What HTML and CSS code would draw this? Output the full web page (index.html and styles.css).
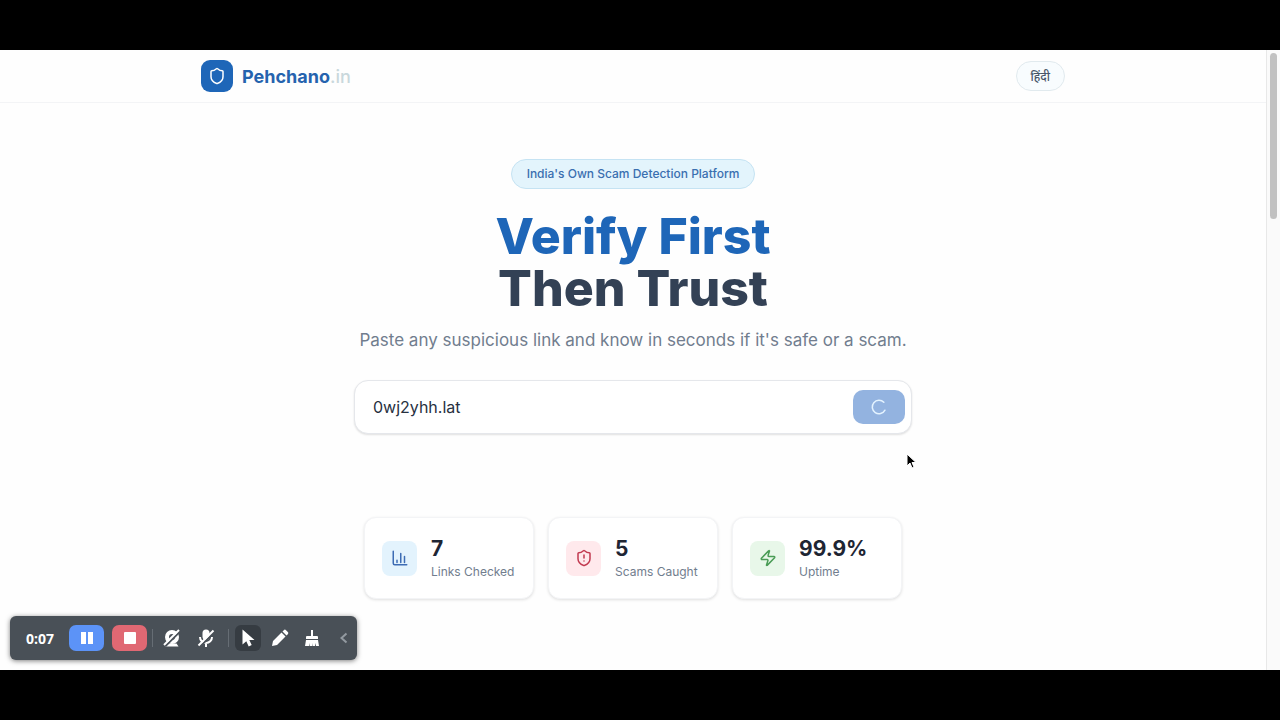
FILE: index.html
```html
<!DOCTYPE html>
<html lang="en">

<head>
  <meta charset="UTF-8" />
  <title>Pehchano.in</title>
  <meta name="viewport" content="width=device-width, initial-scale=1.0" />
  <link rel="stylesheet" href="styles.css">
</head>

<body>

  <div class="screen">
    <div class="page">
      <header class="header">
        <div class="header-inner">
          <a href="#" class="brand">
            <span class="brand-icon">
              <svg viewBox="0 0 24 24" width="18" height="18"><path d="M20 13c0 5-3.500 7.500-7.660 8.950a1 1 0 0 1-.67-.01C7.500 20.500 4 18 4 13V6a1 1 0 0 1 1-1c2 0 4.500-1.200 6.240-2.720a1.170 1.170 0 0 1 1.520 0C14.510 3.810 17 5 19 5a1 1 0 0 1 1 1z" /></svg>
            </span>
            <span class="brand-name">Pehchano<span class="brand-tld">.in</span></span>
          </a>
          <button type="button" class="lang-btn" lang="hi">हिंदी</button>
        </div>
      </header>

      <main class="hero">
        <span class="badge">India's Own Scam Detection Platform</span>
        <h1><span class="title-blue">Verify First</span><br>Then Trust</h1>
        <p class="subtitle">Paste any suspicious link and know in seconds if it's safe or a scam.</p>

        <form class="search">
          <input type="text" class="search-input" aria-label="Link to check" value="0wj2yhh.lat" />
          <button type="submit" class="search-btn" aria-label="Check link" disabled>
            <svg viewBox="0 0 24 24" width="18" height="18"><path d="M21 12a9 9 0 1 1-6.219-8.560" transform="rotate(28 12 12)" /></svg>
          </button>
        </form>

        <div class="stats">
          <div class="card">
            <span class="card-icon blue">
              <svg viewBox="0 0 24 24" width="18" height="18"><path d="M3 3v16a2 2 0 0 0 2 2h16M8 18v-3M13 18V6M18 18v-8" /></svg>
            </span>
            <div>
              <div class="card-value">7</div>
              <div class="card-label">Links Checked</div>
            </div>
          </div>
          <div class="card">
            <span class="card-icon red">
              <svg viewBox="0 0 24 24" width="18" height="18"><path d="M20 13c0 5-3.500 7.500-7.660 8.950a1 1 0 0 1-.67-.01C7.500 20.500 4 18 4 13V6a1 1 0 0 1 1-1c2 0 4.500-1.200 6.240-2.720a1.170 1.170 0 0 1 1.520 0C14.510 3.810 17 5 19 5a1 1 0 0 1 1 1zM12 8v4M12 16h.01" /></svg>
            </span>
            <div>
              <div class="card-value">5</div>
              <div class="card-label">Scams Caught</div>
            </div>
          </div>
          <div class="card">
            <span class="card-icon green">
              <svg viewBox="0 0 24 24" width="18" height="18"><path d="M4 14a1 1 0 0 1-.78-1.630l9.900-10.200a.5.5 0 0 1 .86.460l-1.920 6.020A1 1 0 0 0 13 10h7a1 1 0 0 1 .78 1.630l-9.900 10.200a.5.5 0 0 1-.86-.46l1.920-6.020A1 1 0 0 0 11 14z" /></svg>
            </span>
            <div>
              <div class="card-value">99.9%</div>
              <div class="card-label">Uptime</div>
            </div>
          </div>
        </div>
      </main>
    </div>

    <div class="scrollbar"><div class="thumb"></div></div>

    <svg class="cursor" viewBox="0 0 12 18" width="12" height="18"><path d="M1 1v12l3-3 2 5 2-1-2-4.500h4z" /></svg>

    <div class="recorder">
      <span class="time">0:07</span>
      <button type="button" class="rec-btn pause" aria-label="Pause">
        <svg viewBox="0 0 14 14" width="14" height="14"><path d="M1 1h5v12H1zM8 1h5v12H8z" /></svg>
      </button>
      <button type="button" class="rec-btn stop" aria-label="Stop">
        <svg viewBox="0 0 14 14" width="14" height="14"><rect x="1" y="1" width="12" height="12" rx="1" /></svg>
      </button>
      <span class="sep"></span>
      <div class="tools media">
        <button type="button" class="tool" aria-label="Camera off">
          <svg viewBox="0 0 20 20" width="20" height="20">
            <circle cx="10" cy="9" r="7" />
            <circle cx="10" cy="9" r="3" class="hole" />
            <path d="M3.500 18.500l2-3h9l2 3z" />
            <path d="M3.500 18L19 2.500" class="gap" />
            <path d="M2 17L17 2" class="slash" />
          </svg>
        </button>
        <button type="button" class="tool" aria-label="Microphone off">
          <svg viewBox="0 0 20 20" width="20" height="20">
            <rect x="6.500" y="1.500" width="7" height="10.500" rx="3.500" />
            <path d="M4 9a6 6 0 0 0 12 0M10 15v4" class="slash" />
            <path d="M4 18.500L19.500 3" class="gap" />
            <path d="M2.500 17.500L17.500 2.500" class="slash" />
          </svg>
        </button>
      </div>
      <span class="sep"></span>
      <div class="tools">
        <button type="button" class="tool active" aria-label="Pointer">
          <svg viewBox="0 0 20 20" width="20" height="20"><path d="M4.500 1.500v15l3.800-3.200 2.400 5.200 3-1.400-2.400-5H16.500z" /></svg>
        </button>
        <button type="button" class="tool" aria-label="Draw">
          <svg viewBox="0 0 20 20" width="20" height="20"><path d="M2 18l1-5 8.500-8.500 4 4L7 17zM12.500 3.500l1.300-1.300a1.500 1.500 0 0 1 2.200 0l1.800 1.800a1.500 1.500 0 0 1 0 2.200l-1.300 1.300z" /></svg>
        </button>
        <button type="button" class="tool" aria-label="Clear">
          <svg viewBox="0 0 20 20" width="20" height="20"><path d="M9 2h2v6h4a1 1 0 0 1 1 1v2H4V9a1 1 0 0 1 1-1h4zM4 12h12l1 6h-3l-.5-3-.5 3h-2v-3l-.5 3H8v-3l-.7 3H3z" /></svg>
        </button>
      </div>
      <button type="button" class="collapse" aria-label="Collapse">
        <svg viewBox="0 0 8 12" width="8" height="12"><path d="M6.500 1.500L1.500 6l5 4.500" /></svg>
      </button>
    </div>
  </div>

</body>

</html>
```
FILE: styles.css
```css
* {
  margin: 0;
  padding: 0;
  box-sizing: border-box;
  font-family: Inter, "Noto Sans", sans-serif;
}

body {
  height: 100vh;
  padding: 50px 0;
  background: #000;
  display: flex;
}

button {
  border: none;
  display: flex;
  align-items: center;
  justify-content: center;
}

svg {
  display: block;
}

.screen {
  position: relative;
  flex: 1;
  display: flex;
  background: #fefefe;
  overflow: hidden;
}

.page {
  flex: 1;
}

.header {
  border-bottom: 1px solid #f3f4f6;
}

.header-inner {
  max-width: 864px;
  margin: 0 auto;
  padding: 10px 0;
  display: flex;
  align-items: center;
  justify-content: space-between;
}

.brand {
  display: flex;
  align-items: center;
  gap: 9px;
  text-decoration: none;
}

.brand-icon {
  width: 32px;
  height: 32px;
  border-radius: 9px;
  background: #1e66b8;
  display: flex;
  align-items: center;
  justify-content: center;
}

.brand-icon svg,
.card-icon svg,
.search-btn svg {
  fill: none;
  stroke: currentColor;
  stroke-width: 2;
  stroke-linecap: round;
  stroke-linejoin: round;
}

.brand-icon svg {
  color: #fff;
}

.brand-name {
  font-size: 18px;
  font-weight: 700;
  color: #2563ae;
}

.brand-tld {
  font-weight: 500;
  color: #c9d8dc;
}

.lang-btn {
  height: 30px;
  padding: 0 14px;
  border: 1px solid #e1eaee;
  border-radius: 15px;
  background: #f8fcfe;
  color: #475569;
  font-size: 12px;
  font-weight: 500;
}

.hero {
  padding-top: 56px;
  display: flex;
  flex-direction: column;
  align-items: center;
  text-align: center;
}

.badge {
  padding: 6px 15px;
  border: 1px solid #c5e3f3;
  border-radius: 15px;
  background: #e3f4fc;
  color: #3a6fb0;
  font-size: 12px;
  line-height: 16px;
  font-weight: 500;
}

h1 {
  margin-top: 21px;
  font-size: 50px;
  line-height: 52px;
  font-weight: 800;
  color: #334155;
}

.title-blue {
  color: #1e66b8;
}

.subtitle {
  margin-top: 12px;
  font-size: 17px;
  line-height: 28px;
  color: #717d8e;
}

.search {
  width: 100%;
  max-width: 558px;
  margin-top: 26px;
  padding: 9px 6px 9px 18px;
  border: 1px solid #e5e7eb;
  border-radius: 14px;
  background: #fff;
  box-shadow: 0 1px 2px rgba(0, 0, 0, 0.12);
  display: flex;
}

.search-input {
  flex: 1;
  border: none;
  outline: none;
  background: none;
  font-size: 16px;
  color: #27313f;
}

.search-btn {
  width: 52px;
  height: 34px;
  border-radius: 10px;
  background: #93b3e0;
  color: #e4f3ff;
}

.stats {
  margin-top: 83px;
  display: grid;
  grid-template-columns: repeat(3, 170px);
  gap: 14px;
}

.card {
  padding: 17px;
  border: 1px solid #f3f4f6;
  border-radius: 12px;
  background: #fff;
  box-shadow: 0 1px 3px rgba(0, 0, 0, 0.12);
  display: flex;
  align-items: center;
  gap: 14px;
  text-align: left;
}

.card-icon {
  width: 35px;
  height: 35px;
  border-radius: 8px;
  display: flex;
  align-items: center;
  justify-content: center;
}

.blue {
  background: #e3f3fd;
  color: #3d6cb4;
}

.red {
  background: #ffe9ec;
  color: #c23a50;
}

.green {
  background: #e8f7e9;
  color: #4a9c56;
}

.card-value {
  font-size: 21px;
  line-height: 28px;
  font-weight: 700;
  color: #1e2533;
}

.card-label {
  font-size: 12px;
  line-height: 18px;
  color: #717d8e;
  white-space: nowrap;
}

.scrollbar {
  width: 14px;
  padding: 3px 3px;
  border-left: 1px solid #e8e8e8;
  background: #fafafa;
}

.thumb {
  width: 7px;
  height: 166px;
  border-radius: 4px;
  background: #c1c1c1;
}

.cursor {
  position: absolute;
  left: 906px;
  top: 403px;
  fill: #000;
  stroke: #fff;
  stroke-width: 1;
}

.recorder {
  position: absolute;
  left: 10px;
  bottom: 10px;
  height: 44px;
  padding-left: 16px;
  border-radius: 6px;
  background: #495057;
  box-shadow: 0 1px 5px rgba(0, 0, 0, 0.5);
  display: flex;
  align-items: center;
}

.recorder svg {
  fill: #fff;
}

.time {
  width: 43px;
  font-family: "Open Sans", sans-serif;
  font-size: 14px;
  font-weight: 700;
  color: #fff;
}

.rec-btn {
  width: 35px;
  height: 26px;
  border-radius: 7px;
}

.pause {
  margin-right: 8px;
  background: #5c93f7;
}

.stop {
  margin-right: 5px;
  background: #e06873;
}

.sep {
  width: 1px;
  height: 18px;
  background: #666d74;
}

.tools {
  padding: 0 6px;
  display: flex;
  gap: 6px;
}

.media {
  padding-right: 9px;
  gap: 8px;
}

.tool {
  width: 26px;
  height: 26px;
  border-radius: 6px;
  background: none;
}

.active {
  background: #363c42;
}

.recorder .hole {
  fill: #495057;
}

.recorder .slash,
.recorder .gap {
  fill: none;
  stroke: #fff;
  stroke-width: 2;
}

.recorder .gap {
  stroke: #495057;
}

.collapse {
  width: 26px;
  height: 26px;
  background: none;
}

.collapse svg {
  fill: none;
  stroke: #9299a0;
  stroke-width: 2;
}
```
